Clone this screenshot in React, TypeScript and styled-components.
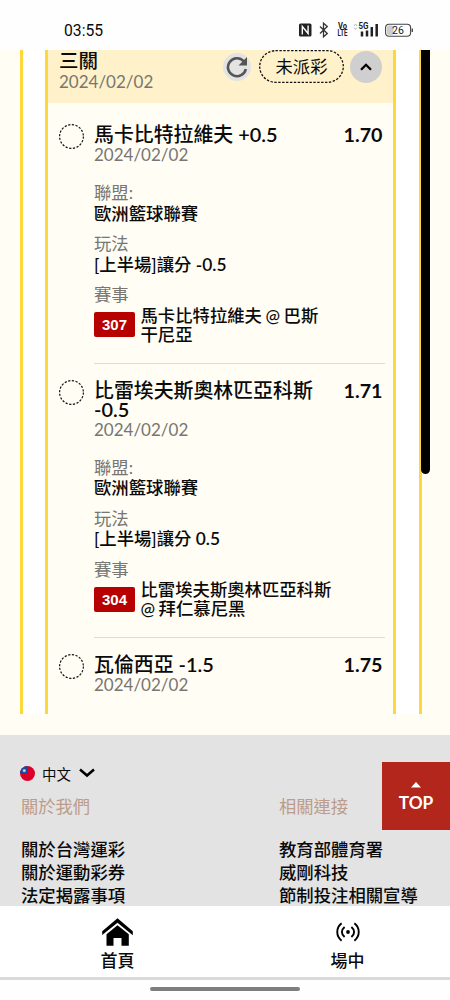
import React from 'react';
import styled, { createGlobalStyle } from 'styled-components';

const Global = createGlobalStyle`
  * { box-sizing: border-box; }
  body { margin: 0; background: #fefefe; }
`;

const Screen = styled.div`
  position: relative;
  display: flex;
  flex-direction: column;
  width: 450px;
  height: 1000px;
  overflow: hidden;
  background: #fefefe;
  color: #0a0a0a;
  font-family: Lato, 'Noto Sans CJK TC', sans-serif;
`;

const StatusBar = styled.header`
  flex: none;
  display: flex;
  justify-content: space-between;
  height: 50px;
  padding: 20px 37px 0 64px;
`;

const Clock = styled.span`
  font: 400 15.7px/21px Roboto, sans-serif;
`;

const Content = styled.main`
  flex: none;
  height: 685px;
  padding: 0 28px 21px 20px;
  background: #fffdf4;
`;

const OuterFrame = styled.section`
  position: relative;
  height: 664px;
  padding: 0 23px 0 22px;
  border: solid #fdd83a;
  border-width: 0 3px;
  background: #fff;
`;

const ScrollThumb = styled.div`
  position: absolute;
  top: 0;
  right: -11px;
  width: 9px;
  height: 424px;
  border-radius: 0 0 4.5px 4.5px;
  background: #000;
`;

const Slip = styled.div`
  height: 100%;
  overflow: hidden;
  border: solid #fdd83a;
  border-width: 0 3px;
  background: #fffdf4;
`;

const SlipHeader = styled.div`
  display: flex;
  justify-content: space-between;
  height: 53px;
  padding: 0 11px;
  background: #fff1c9;
`;

const SlipName = styled.div`
  font-size: 19.5px;
  font-weight: 500;
  line-height: 22px;
`;

const DateText = styled.div`
  padding-top: 1px;
  color: #777672;
  font-size: 17px;
  line-height: 20px;
`;

const SlipDate = styled(DateText)`
  padding-top: 0;
  line-height: 19px;
`;

const SlipActions = styled.div`
  display: flex;
  align-items: center;
  height: 33px;
`;

const RoundButton = styled.span<{ $size: number; $bg: string }>`
  display: flex;
  align-items: center;
  justify-content: center;
  width: ${p => p.$size}px;
  height: ${p => p.$size}px;
  border-radius: 50%;
  background: ${p => p.$bg};
`;

const Pill = styled.span`
  position: relative;
  display: flex;
  align-items: center;
  justify-content: center;
  width: 85px;
  height: 33px;
  margin: 0 6px 0 8px;
  font-size: 17.3px;
  line-height: 20px;
`;

const PillOutline = styled.svg`
  position: absolute;
  inset: 0;
`;

const Bets = styled.div`
  padding: 5px 8px 0 11px;
`;

const Bet = styled.article`
  display: flex;
  padding-top: 17px;
`;

const Ring = styled.svg`
  flex: none;
  width: 25px;
  height: 25px;
  margin: -1px 10px 0 0;
`;

const BetBody = styled.div<{ $last: boolean }>`
  flex: 1;
  padding-bottom: 19px;
  border-bottom: ${p => (p.$last ? 'none' : '1px solid #dddbd5')};
`;

const BetTop = styled.div`
  display: flex;
  justify-content: space-between;
  padding-right: 2.5px;
  font-size: 19.9px;
  font-weight: 500;
  line-height: 19px;
`;

const BetTitle = styled.h3`
  width: 224px;
  margin: 0;
  font-size: inherit;
  font-weight: inherit;
`;

const Odds = styled.span`
  font-size: 19.7px;
  font-weight: 700;
`;

const Strong = styled.span`
  font-weight: 600;
`;

const Field = styled.div`
  margin-top: 10px;
  font-size: 17.35px;
  line-height: 20.5px;
`;

const Fields = styled.div`
  padding-top: 8px;
`;

const Label = styled.div`
  color: #777672;
  font-weight: 400;
`;

const Value = styled.div`
  font-weight: 500;
`;

const Match = styled.div`
  display: flex;
  align-items: center;
  gap: 5.5px;
  line-height: 19px;
`;

const Code = styled.span`
  flex: none;
  width: 41px;
  height: 25px;
  border-radius: 2px;
  background: #b70000;
  color: #fff;
  font: 700 15px/26px 'Liberation Sans', sans-serif;
  text-align: center;
`;

const Teams = styled.span`
  width: 200px;
  font-weight: 500;
  word-spacing: -0.8px;
`;

const Footer = styled.footer`
  flex: none;
  height: 171px;
  padding: 28px 20px 0;
  overflow: hidden;
  background: #e3e3e3;
`;

const Language = styled.div`
  display: flex;
  align-items: center;
  height: 20px;
  font-size: 14.5px;
`;

const LanguageName = styled.span`
  margin: 0 8px 0 7px;
`;

const Columns = styled.div`
  display: grid;
  grid-template-columns: 258px 1fr;
  padding-left: 1px;
`;

const ColumnTitle = styled.div`
  margin: 12px 0 20px;
  color: #bc9c8a;
  font-size: 17.3px;
  line-height: 23px;
`;

const FooterLink = styled.div`
  font-size: 17.35px;
  font-weight: 500;
  line-height: 23px;
  white-space: nowrap;
`;

const TopButton = styled.div`
  position: absolute;
  top: 762px;
  right: 0;
  display: flex;
  flex-direction: column;
  align-items: center;
  gap: 5px;
  width: 68px;
  height: 68px;
  padding-top: 20px;
  background: #b3261b;
  color: #fff;
  font-size: 17.3px;
  font-weight: 700;
  line-height: 20px;
`;

const TabBar = styled.nav`
  flex: none;
  display: grid;
  grid-template-columns: 235px 225px;
  height: 74px;
  border-bottom: 3px solid #dadada;
  background: #fff;
`;

const Tab = styled.div`
  display: flex;
  flex-direction: column;
  align-items: center;
  padding-top: 9px;
  font-size: 17px;
  font-weight: 500;
  line-height: 24px;
`;

const TabIcon = styled.span`
  display: flex;
  align-items: center;
  height: 34px;
`;

const HomeIndicator = styled.div`
  width: 150px;
  height: 4px;
  margin: 7px auto 0;
  border-radius: 2px;
  background: #7d7f7e;
`;

const StatusIcons = () => (
  <svg width="116" height="20" viewBox="297 20 116 20">
    <rect x="299" y="23.5" width="12.5" height="13" rx="1.5" fill="#222" />
    <path d="M302.3 34.5v-8l5.8 7v-8" fill="none" stroke="#fff" strokeWidth="1.4" />
    <path d="M320 26.5l7.3 7-3.8 3.3V23.2l3.8 3.3-7.3 7" fill="none" stroke="#333" strokeWidth="1.3" />
    <g fill="#222" fontFamily="Roboto, sans-serif" fontWeight="700">
      <text x="338" y="29.3" fontSize="8.5" textLength="9" lengthAdjust="spacingAndGlyphs">Vo</text>
      <text x="337.5" y="36.4" fontSize="8.5" textLength="10" lengthAdjust="spacingAndGlyphs">LTE</text>
      <text x="358.5" y="29.3" fontSize="8.5" textLength="10" lengthAdjust="spacingAndGlyphs">5G</text>
    </g>
    <path d="M354 26l1.5-2 1.5 2M354 27.5l1.5 2 1.5-2" fill="none" stroke="#bbb" />
    <path d="M362 31.5v5M367 30.5v6M371.8 27v9.5M376.7 24v12.5" stroke="#222" strokeWidth="2.5" />
    <rect x="387" y="25.5" width="6.5" height="9.5" rx="2" fill="#ccc" />
    <rect x="385.6" y="24.2" width="25" height="12" rx="3.5" fill="none" stroke="#444" strokeWidth="1.1" />
    <path d="M412.3 28.5v3.5" stroke="#444" strokeWidth="1.3" />
    <text x="398" y="34" fontSize="10.5" textAnchor="middle" fill="#222" fontFamily="Roboto, sans-serif">26</text>
  </svg>
);

const ReloadIcon = () => (
  <svg width="22" height="22" viewBox="0 0 22 22">
    <path d="M17.7 5.2A9 9 0 1 0 19.8 13" fill="none" stroke="#555" strokeWidth="2.6" />
    <path d="M21 1v8.5h-8.5z" fill="#555" />
  </svg>
);

const HomeIcon = () => (
  <svg width="31" height="28" viewBox="0 0 31 28">
    <path d="M.2 13.2L15.5.3l15.3 12.9v4L15.5 4.7.2 17z" fill="#000" />
    <path d="M4.5 16.2l11-9 11.3 9v11.5h-7.3v-7.8h-8v7.8h-7z" fill="#000" />
  </svg>
);

const LiveIcon = () => (
  <svg width="24" height="20" viewBox="0 0 24 20" fill="none" stroke="#000" strokeWidth="1.9">
    <circle cx="12" cy="10" r="1.9" fill="#000" stroke="none" />
    <path d="M5.6 1.3C-.2 6-.2 14 5.6 18.7M18.4 1.3c5.8 4.7 5.8 12.7 0 17.4M8.6 4.9C5 7.8 5 12.2 8.6 15.1M15.4 4.9c3.6 2.9 3.6 7.3 0 10.2" />
  </svg>
);

const FlagIcon = () => (
  <svg width="15" height="15" viewBox="0 0 15 15">
    <circle cx="7.5" cy="7.5" r="7.5" fill="#dc0028" />
    <path d="M7.5 0v7.5H0A7.5 7.5 0 0 1 7.5 0z" fill="#174a9c" />
    <circle cx="4.3" cy="4.6" r="1.6" fill="#a9c8ee" />
  </svg>
);

type BetData = {
  title: React.ReactNode;
  odds: string;
  play?: React.ReactNode;
  code?: string;
  teams?: React.ReactNode;
};

const bets: BetData[] = [
  {
    title: <>馬卡比特拉維夫 <Strong>+0.5</Strong></>,
    odds: '1.70',
    play: <>[上半場]讓分 <Strong>-0.5</Strong></>,
    code: '307',
    teams: <>馬卡比特拉維夫 @ 巴斯<br />干尼亞</>,
  },
  {
    title: <>比雷埃夫斯奧林匹亞科斯 <Strong>-0.5</Strong></>,
    odds: '1.71',
    play: <>[上半場]讓分 <Strong>0.5</Strong></>,
    code: '304',
    teams: <>比雷埃夫斯奧林匹亞科斯<br />@ 拜仁慕尼黑</>,
  },
  { title: <>瓦倫西亞 <Strong>-1.5</Strong></>, odds: '1.75' },
];

const BetCard = ({ bet, last }: { bet: BetData; last: boolean }) => (
  <Bet>
    <Ring viewBox="0 0 25 25">
      <circle cx="12.5" cy="12.5" r="11.9" fill="none" stroke="#111" strokeWidth="1.2" strokeDasharray="2.2 1.54" />
    </Ring>
    <BetBody $last={last}>
      <BetTop>
        <BetTitle>{bet.title}</BetTitle>
        <Odds>{bet.odds}</Odds>
      </BetTop>
      <DateText>2024/02/02</DateText>
      {bet.play && (
        <Fields>
          <Field>
            <Label>聯盟:</Label>
            <Value>歐洲籃球聯賽</Value>
          </Field>
          <Field>
            <Label>玩法</Label>
            <Value>{bet.play}</Value>
          </Field>
          <Field>
            <Label>賽事</Label>
            <Match>
              <Code>{bet.code}</Code>
              <Teams>{bet.teams}</Teams>
            </Match>
          </Field>
        </Fields>
      )}
    </BetBody>
  </Bet>
);

const footerColumns = [
  { title: '關於我們', links: ['關於台灣運彩', '關於運動彩券', '法定揭露事項'] },
  { title: '相關連接', links: ['教育部體育署', '威剛科技', '節制投注相關宣導'] },
];

export default function App() {
  return (
    <Screen>
      <Global />
      <StatusBar>
        <Clock>03:55</Clock>
        <StatusIcons />
      </StatusBar>
      <Content>
        <OuterFrame>
          <Slip>
            <SlipHeader>
              <div>
                <SlipName>三關</SlipName>
                <SlipDate>2024/02/02</SlipDate>
              </div>
              <SlipActions>
                <RoundButton $size={28} $bg="#e3e3e3"><ReloadIcon /></RoundButton>
                <Pill>
                  <PillOutline width="85" height="33" viewBox="0 0 85 33">
                    <rect x="0.7" y="0.7" width="83.6" height="31.6" rx="15.8" fill="none" stroke="#111" strokeWidth="1.3" strokeDasharray="2.4 1.5" />
                  </PillOutline>
                  未派彩
                </Pill>
                <RoundButton $size={32} $bg="#cfcfcf">
                  <svg width="12" height="8" viewBox="0 0 12 8" fill="none" stroke="#000" strokeWidth="2.3">
                    <path d="M1 6.8l5-5 5 5" />
                  </svg>
                </RoundButton>
              </SlipActions>
            </SlipHeader>
            <Bets>
              {bets.map((bet, i) => <BetCard key={bet.odds} bet={bet} last={i === bets.length - 1} />)}
            </Bets>
          </Slip>
          <ScrollThumb />
        </OuterFrame>
      </Content>
      <Footer>
        <Language>
          <FlagIcon />
          <LanguageName>中文</LanguageName>
          <svg width="16" height="10" viewBox="0 0 16 10" fill="none" stroke="#000" strokeWidth="2.5">
            <path d="M1 1.5l7 6 7-6" />
          </svg>
        </Language>
        <Columns>
          {footerColumns.map(col => (
            <div key={col.title}>
              <ColumnTitle>{col.title}</ColumnTitle>
              {col.links.map(link => <FooterLink key={link}>{link}</FooterLink>)}
            </div>
          ))}
        </Columns>
      </Footer>
      <TabBar>
        <Tab>
          <TabIcon><HomeIcon /></TabIcon>
          首頁
        </Tab>
        <Tab>
          <TabIcon><LiveIcon /></TabIcon>
          場中
        </Tab>
      </TabBar>
      <HomeIndicator />
      <TopButton>
        <svg width="10" height="6" viewBox="0 0 10 6"><path d="M0 5.6L5 0l5 5.6z" fill="#fff" /></svg>
        <span>TOP</span>
      </TopButton>
    </Screen>
  );
}
